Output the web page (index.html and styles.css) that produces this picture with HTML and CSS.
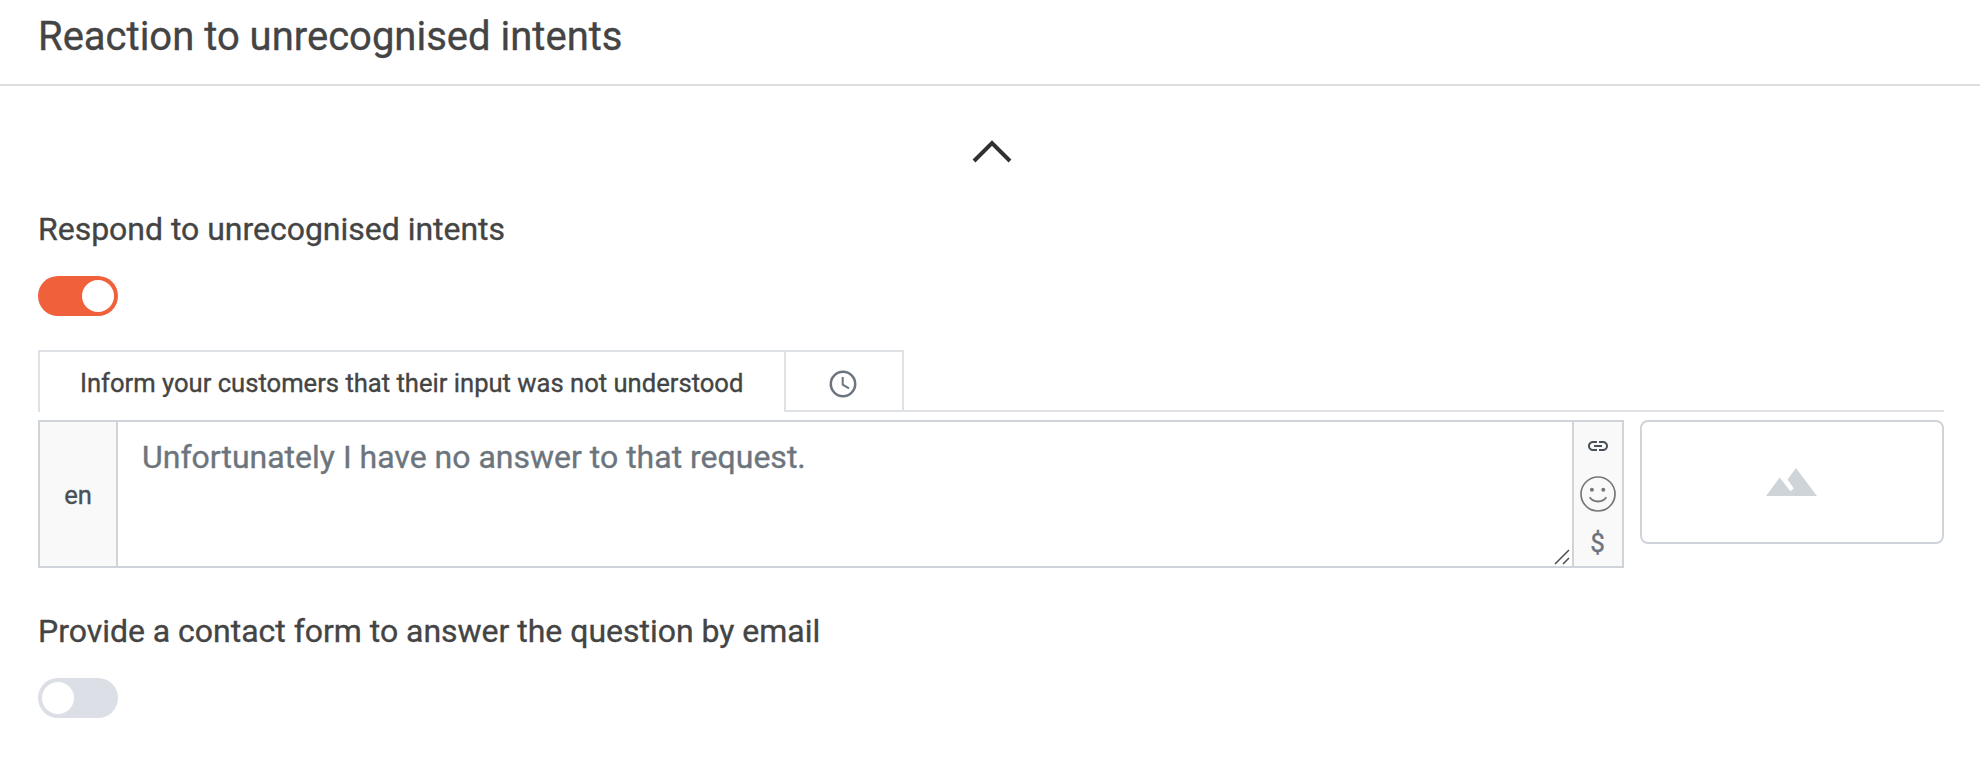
FILE: index.html
```html
<!DOCTYPE html>
<html lang="en">
<head>
<meta charset="utf-8">
<title>Reaction to unrecognised intents</title>
<link rel="stylesheet" href="styles.css">
</head>
<body>
<header class="panel-header"><h1 class="title">Reaction to unrecognised intents</h1></header>
<main class="panel">
  <div class="collapse">
    <svg width="40" height="24" viewBox="0 0 40 24"><path d="M2 21 20 3 38 21" fill="none" stroke="#303232" stroke-width="4"/></svg>
  </div>
  <h2 class="label">Respond to unrecognised intents</h2>
  <div class="toggle toggle-on"><span class="knob"></span></div>
  <nav class="tabs">
    <div class="tab tab-active"><span class="tab-text">Inform your customers that their input was not understood</span></div>
    <div class="tab tab-time">
      <svg width="28" height="28" viewBox="0 0 28 28" fill="none" stroke="#6c757d"><circle cx="14" cy="14" r="12.2" stroke-width="2.5"/><path d="M13.7 7v7.6l6.3 3.8" stroke-width="2"/></svg>
    </div>
    <div class="tab-rest"></div>
  </nav>
  <div class="answer">
    <div class="editor">
      <div class="lang">en</div>
      <div class="message">
        <span class="message-text">Unfortunately I have no answer to that request.</span>
        <svg class="grip" width="16" height="16" viewBox="0 0 16 16"><path d="M1 15 15 1M9 15 15 9" fill="none" stroke="#4b4b4b" stroke-width="1.5"/></svg>
      </div>
      <div class="tools">
        <svg class="link" width="20" height="10" viewBox="2 7 20 10" fill="#495057"><path d="M3.9 12c0-1.71 1.39-3.1 3.1-3.1h4V7H7c-2.76 0-5 2.24-5 5s2.24 5 5 5h4v-1.900H7c-1.710 0-3.100-1.390-3.100-3.100zM8 13h8v-2H8v2zm9-6h-4v1.900h4c1.710 0 3.100 1.390 3.100 3.100s-1.390 3.100-3.100 3.100h-4V17h4c2.760 0 5-2.240 5-5s-2.240-5-5-5z"/></svg>
        <svg class="smile" width="36" height="36" viewBox="0 0 36 36"><circle cx="18" cy="18" r="17" fill="none" stroke="#777" stroke-width="1.700"/><circle cx="11.900" cy="13.700" r="2" fill="#777"/><circle cx="23.300" cy="13.700" r="2" fill="#777"/><path d="M9.700 21.300c3.700 5.600 12.900 5.600 16.600 0" fill="none" stroke="#777" stroke-width="1.800"/></svg>
        <span class="dollar">$</span>
      </div>
    </div>
    <div class="picture">
      <svg width="51" height="28" viewBox="0 0 52 28" preserveAspectRatio="none"><path d="M0 28 14 9.500 24.800 23.300 28.400 20.500 22 11.500 30.500 0 52 28z" fill="#ced4da"/></svg>
    </div>
  </div>
  <h2 class="label label-contact">Provide a contact form to answer the question by email</h2>
  <div class="toggle"><span class="knob"></span></div>
</main>
</body>
</html>
```
FILE: styles.css
```css
* { box-sizing: border-box; }
body { margin: 0; background: #fff; color: #444; font-family: Roboto, sans-serif; -webkit-text-stroke: 0.35px currentColor; }
svg { display: block; }
.panel-header { height: 86px; padding: 13px 38px 0; border-bottom: 2px solid #dedede; }
.title { margin: 0; font-size: 40px; line-height: 48px; font-weight: 400; }
.panel { padding: 54px 36px 0 38px; }
.collapse { display: flex; justify-content: center; height: 70px; padding-left: 2px; }
.label { margin: 0; font-size: 32px; line-height: 38px; font-weight: 400; letter-spacing: -0.02px; }
.toggle { display: flex; width: 80px; height: 40px; margin-top: 28px; padding: 4px; border-radius: 20px; background: #dcdfe6; }
.toggle-on { justify-content: flex-end; background: #f0603a; }
.knob { width: 32px; height: 32px; border-radius: 50%; background: #fff; }
.tabs { display: flex; height: 62px; margin-top: 34px; }
.tab { border: 2px solid #dee2e6; }
.tab-active { width: 746px; padding: 15px 0 0 40px; border-right: 0; border-bottom: 0; font-size: 25.6px; line-height: 32px; white-space: nowrap; }
.tab-time { width: 120px; padding: 18px 0 0 43px; }
.tab-rest { flex: 1; border-bottom: 2px solid #dee2e6; }
.answer { display: flex; align-items: flex-start; gap: 16px; margin-top: 8px; }
.editor { display: flex; flex: 1; height: 148px; border: 2px solid #ced4da; }
.lang { display: flex; align-items: center; justify-content: center; width: 78px; padding-top: 2px; border-right: 2px solid #ced4da; background: #f9f9f9; color: #495057; font-size: 25.6px; }
.message { position: relative; flex: 1; padding: 16px 24px; color: #6c757d; font-size: 32px; line-height: 38px; }
.grip { position: absolute; right: 2px; bottom: 1px; }
.tools { display: flex; flex-direction: column; align-items: center; width: 50px; padding-top: 19px; border-left: 2px solid #ced4da; background: #f9f9f9; }
.smile { margin-top: 25px; }
.dollar { margin-top: 14px; padding-right: 1px; color: #6c757d; font-size: 26px; line-height: 34px; }
.picture { display: flex; align-items: center; justify-content: center; width: 304px; height: 124px; padding-right: 1px; border: 2px solid #ced4da; border-radius: 8px; }
.label-contact { margin-top: 44px; }
```
